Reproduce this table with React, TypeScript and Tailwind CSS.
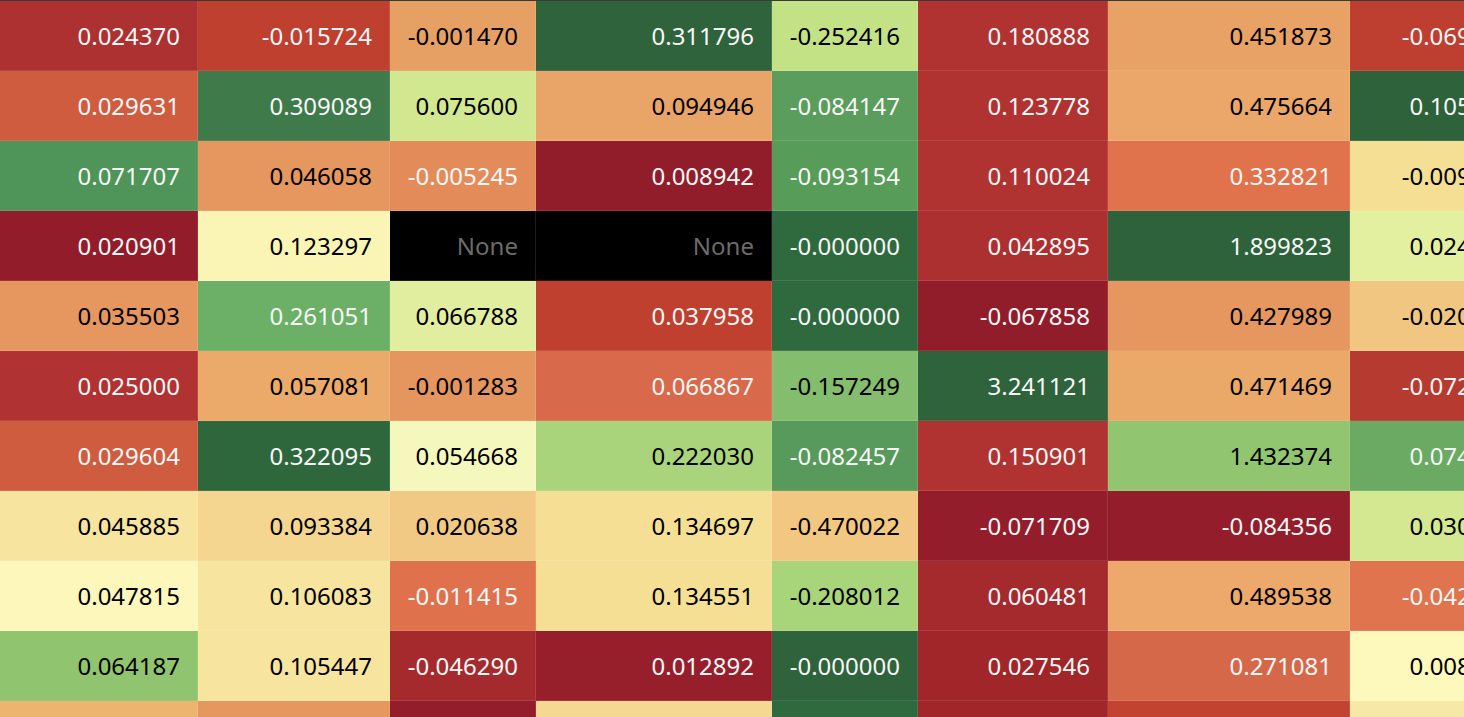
import React from 'react'

type Cell = { v: string; bg: string; light?: boolean }

// column widths in px
const widths = ['w-[198px]', 'w-[192px]', 'w-[146px]', 'w-[236px]', 'w-[146px]', 'w-[190px]', 'w-[242px]', 'w-[180px]']

// W = white text, B = black text, N = missing value
const rows: [string, string, 'W' | 'B' | 'N'][][] = [
  [['0.024370', '#ad3130', 'W'], ['-0.015724', '#c04030', 'W'], ['-0.001470', '#e7a064', 'B'], ['0.311796', '#2f633b', 'W'], ['-0.252416', '#c3e285', 'B'], ['0.180888', '#b03331', 'W'], ['0.451873', '#e8a265', 'B'], ['-0.069418', '#be3f30', 'W']],
  [['0.029631', '#d05c40', 'W'], ['0.309089', '#3f7b4a', 'W'], ['0.075600', '#d2e890', 'B'], ['0.094946', '#e9a567', 'B'], ['-0.084147', '#5a9d5c', 'W'], ['0.123778', '#b03331', 'W'], ['0.475664', '#eaa769', 'B'], ['0.105392', '#2e623a', 'W']],
  [['0.071707', '#4f9459', 'W'], ['0.046058', '#e5975f', 'B'], ['-0.005245', '#e38c59', 'W'], ['0.008942', '#911d2b', 'W'], ['-0.093154', '#589c5a', 'W'], ['0.110024', '#b03331', 'W'], ['0.332821', '#e0724c', 'W'], ['-0.009127', '#f4df94', 'B']],
  [['0.020901', '#931c2b', 'W'], ['0.123297', '#fbf5b5', 'B'], ['None', '#000000', 'N'], ['None', '#000000', 'N'], ['-0.000000', '#2f6a3e', 'W'], ['0.042895', '#ad3030', 'W'], ['1.899823', '#2e623a', 'W'], ['0.024815', '#e3f0a0', 'B']],
  [['0.035503', '#e5975f', 'B'], ['0.261051', '#6caf66', 'W'], ['0.066788', '#e1ee9f', 'B'], ['0.037958', '#c0402f', 'W'], ['-0.000000', '#2f6a3e', 'W'], ['-0.067858', '#911d2b', 'W'], ['0.427989', '#e5975f', 'B'], ['-0.020563', '#f1c680', 'B']],
  [['0.025000', '#b03232', 'W'], ['0.057081', '#eba96a', 'B'], ['-0.001283', '#e5955e', 'B'], ['0.066867', '#d8694a', 'W'], ['-0.157249', '#83bd6d', 'B'], ['3.241121', '#2e633b', 'W'], ['0.471469', '#eaa969', 'B'], ['-0.072904', '#b73a30', 'W']],
  [['0.029604', '#d05c40', 'W'], ['0.322095', '#2f673d', 'W'], ['0.054668', '#f5f8bc', 'B'], ['0.222030', '#aad47b', 'B'], ['-0.082457', '#579a5b', 'W'], ['0.150901', '#b03331', 'W'], ['1.432374', '#92c56f', 'B'], ['0.074311', '#6aaa62', 'W']],
  [['0.045885', '#f6e49f', 'B'], ['0.093384', '#f4d690', 'B'], ['0.020638', '#f1c985', 'B'], ['0.134697', '#f5df95', 'B'], ['-0.470022', '#f2c782', 'B'], ['-0.071709', '#931d2b', 'W'], ['-0.084356', '#931d2b', 'W'], ['0.030478', '#d3e891', 'B']],
  [['0.047815', '#fdf7bb', 'B'], ['0.106083', '#f6e49f', 'B'], ['-0.011415', '#df724d', 'W'], ['0.134551', '#f5df95', 'B'], ['-0.208012', '#a8d47a', 'B'], ['0.060481', '#a52a2e', 'W'], ['0.489538', '#eca96b', 'B'], ['-0.042170', '#df744e', 'W']],
  [['0.064187', '#91c46f', 'B'], ['0.105447', '#f7e49f', 'B'], ['-0.046290', '#a52a2e', 'W'], ['0.012892', '#971f2c', 'W'], ['-0.000000', '#2e633b', 'W'], ['0.027546', '#a02629', 'W'], ['0.271081', '#d6684a', 'W'], ['0.008215', '#fdf8bb', 'B']],
  [['0.041275', '#edb470', 'B'], ['0.048810', '#e5975f', 'B'], ['-0.003511', '#931d2b', 'W'], ['0.141202', '#f5d993', 'B'], ['-0.000000', '#2f6a3e', 'W'], ['0.031840', '#a02629', 'W'], ['0.290617', '#c2432f', 'W'], ['0.012034', '#f6e8a6', 'B']],
]

export default function App() {
  return (
    <div className="w-screen h-screen overflow-hidden bg-black" style={{ fontFamily: '"Noto Sans", "Open Sans", sans-serif' }}>
      <div className="w-max border-t border-[#3a3a3a]">
        {rows.map((row, r) => (
          <div key={r} className="flex h-[70px]">
            {row.map(([v, bg, kind], c) => (
              <div
                key={c}
                className={`${widths[c]} shrink-0 flex items-center justify-end pr-[17px] text-[24px] leading-none border-b border-r ${
                  kind === 'N' ? 'border-[#1c1c1c] text-[#6b6b6b]' : kind === 'W' ? 'border-white/10 text-[#f7f7f7]' : 'border-white/10 text-black'
                }`}
                style={{ backgroundColor: bg }}
              >
                {v}
              </div>
            ))}
          </div>
        ))}
      </div>
    </div>
  )
}
